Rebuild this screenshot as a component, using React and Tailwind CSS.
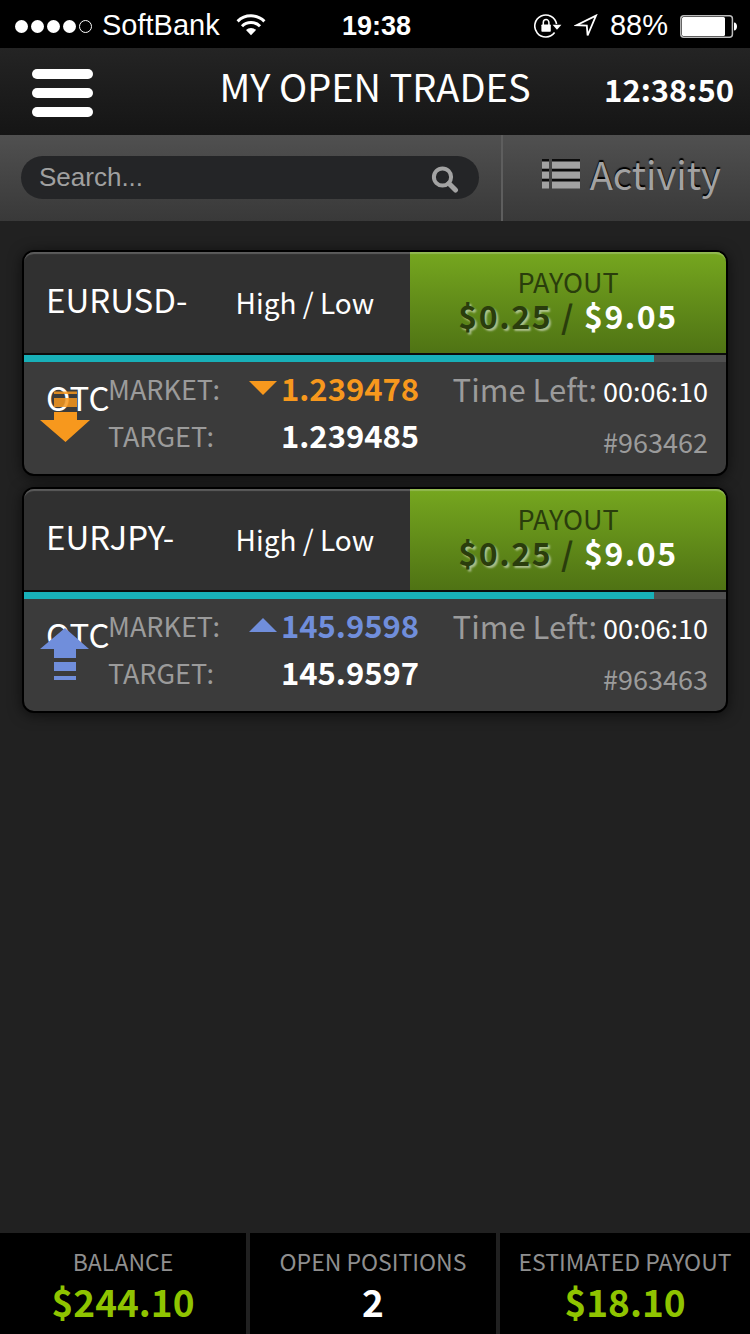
import React from "react";

const TRADES = [
  { id: "963462", symbol: "EURUSD-OTC", kind: "High / Low", dir: "down", market: "1.239478", target: "1.239485", timeLeft: "00:06:10", lose: "$0.25", win: "$9.05", pct: 89.7 },
  { id: "963463", symbol: "EURJPY-OTC", kind: "High / Low", dir: "up", market: "145.9598", target: "145.9597", timeLeft: "00:06:10", lose: "$0.25", win: "$9.05", pct: 89.7 },
];

const TOTALS = [
  { label: "BALANCE", value: "$244.10", color: "text-[#8fc400]" },
  { label: "OPEN POSITIONS", value: "2", color: "text-white" },
  { label: "ESTIMATED PAYOUT", value: "$18.10", color: "text-[#8fc400]" },
];

function WifiIcon() {
  return (
    <svg width="30" height="22" viewBox="0 0 30 22" fill="none" stroke="#fff" strokeWidth="3">
      <path d="M1.6 7.4a19 19 0 0 1 26.8 0" />
      <path d="M6 12.2a12.8 12.8 0 0 1 18 0" />
      <path d="M15 21.2l-5-5.2a7.2 7.2 0 0 1 10 0z" fill="#fff" stroke="none" />
    </svg>
  );
}

function RotationLockIcon() {
  return (
    <svg width="28" height="24" viewBox="0 0 28 24" fill="none" stroke="#fff">
      <path d="M22.6 10A11 11 0 1 0 20.6 18.6" strokeWidth="1.6" />
      <path d="M18.6 10.8h8.8l-4.4 5z" fill="#fff" stroke="none" />
      <rect x="7.4" y="10.4" width="9.4" height="7.4" rx="0.8" fill="#fff" stroke="none" />
      <path d="M9.3 11V8.4a2.8 2.8 0 0 1 5.6 0V11" strokeWidth="1.5" />
    </svg>
  );
}

function LocationIcon() {
  return (
    <svg width="24" height="24" viewBox="0 0 24 24" fill="none" stroke="#fff" strokeWidth="1.8">
      <path d="M22 1.6L2.5 11.2l10.3 0.5L13.6 21.5z" />
    </svg>
  );
}

function BatteryIcon() {
  return (
    <svg width="58" height="23" viewBox="0 0 58 23">
      <rect x="0.8" y="0.8" width="51.6" height="21.4" rx="3" fill="none" stroke="#bbb" strokeWidth="1.5" />
      <rect x="2" y="2" width="43" height="19" rx="1.5" fill="#fff" />
      <path d="M54 7.5c4 0 4 8 0 8z" fill="#fff" />
    </svg>
  );
}

function ListIcon() {
  return (
    <svg width="38" height="32" viewBox="0 0 38 32">
      {[0, 10, 20].map((y) => (
        <g key={y}>
          <path d={`M0 ${y + 1}h7v3h-7zM10 ${y + 1}h28v3h-28z`} fill="#0c0c0c" />
          <path d={`M0 ${y + 3.5}h7v7h-7zM10 ${y + 3.5}h28v7h-28z`} fill="#a2a2a2" />
        </g>
      ))}
    </svg>
  );
}

function DirectionArrow({ dir }) {
  if (dir === "down") {
    return (
      <svg width="50" height="52" viewBox="0 0 50 52" fill="#f7981d">
        <path d="M14 0.5h23v2.5H14zM14 7h23v9H14z" opacity="0.85" />
        <path d="M14 21h23v8h13L25.5 51 0 29h14z" />
      </svg>
    );
  }
  return (
    <svg width="50" height="52" viewBox="0 0 50 52" fill="#708edb">
      <path d="M25 0l24 21H36v9H14v-9H0z" />
      <path d="M14 34h22v9H14zM14 48h22v4H14z" />
    </svg>
  );
}

function StatusBar() {
  return (
    <div className="grid h-12 grid-cols-[1fr_auto_1fr] items-center bg-black pt-1 pr-3 pl-[15px] font-['Liberation_Sans',sans-serif] text-[29px] text-white">
      <div className="flex items-center gap-2.5">
        <div className="flex gap-[3px]">
          {[0, 1, 2, 3].map((i) => (
            <span key={i} className="size-[13px] rounded-full bg-white" />
          ))}
          <span className="size-[13px] rounded-full border border-white" />
        </div>
        <span>SoftBank</span>
        <div className="pb-0.5 pl-1.5">
          <WifiIcon />
        </div>
      </div>
      <span className="text-[27px] font-bold">19:38</span>
      <div className="flex items-center justify-end gap-3">
        <RotationLockIcon />
        <LocationIcon />
        <span>88%</span>
        <BatteryIcon />
      </div>
    </div>
  );
}

function TradeCard({ trade }) {
  const down = trade.dir === "down";
  return (
    <article className="rounded-xl border-2 border-black bg-[#3b3b3b] shadow-[0_2px_14px_rgba(0,0,0,0.6)]">
      <div className="flex h-[103px] rounded-t-[10px] border-b-2 border-[#0c0c0c] bg-[#303030] shadow-[inset_0_3px_1px_-1px_#5c5c5c]">
        <h2 className="relative z-10 -mt-0.5 w-[30%] pl-[22px] text-[33px] leading-[98px] text-white">{trade.symbol}</h2>
        <p className="w-1/4 pl-px text-[28px] leading-[101px] text-white">{trade.kind}</p>
        <div className="w-[45%] rounded-tr-[10px] bg-linear-to-b from-[#76a71f] to-[#4f7314] pt-[15px] text-center text-[#2a3d0c] shadow-[inset_0_3px_1px_-1px_#93ba52]">
          <p className="text-[27px] leading-[30px]">PAYOUT</p>
          <p className="text-[32px] leading-[37px] font-bold tracking-wider">
            <span className="[text-shadow:2px_2px_2px_rgba(255,255,255,0.5)]">{trade.lose}</span> /{" "}
            <span className="text-white">{trade.win}</span>
          </p>
        </div>
      </div>

      <div className="h-[7px] bg-[#4f4f4f]">
        <div className="h-full bg-[#18b0b8]" style={{ width: `${trade.pct}%` }} />
      </div>

      <div className="relative flex h-28 justify-between pr-[18px]">
        <div className="absolute top-[29px] left-4 z-20">
          <DirectionArrow dir={trade.dir} />
        </div>
        <dl className="grid grid-cols-[141px_auto] content-start pt-0.5 pl-[84px] leading-[47px]">
          <dt className="pt-0.5 text-[27px] leading-[45px] text-[#9b9b9b]">MARKET:</dt>
          <dd className={`flex items-center gap-1 text-[31px] font-bold ${down ? "text-[#f7981d]" : "text-[#708edb]"}`}>
            <svg width="28" height="14" viewBox="0 0 28 14" fill="currentColor">
              <path d={down ? "M0 0h28L14 14z" : "M0 14h28L14 0z"} />
            </svg>
            {trade.market}
          </dd>
          <dt className="pt-0.5 text-[27px] leading-[45px] text-[#9b9b9b]">TARGET:</dt>
          <dd className="pl-8 text-[31px] font-bold text-white">{trade.target}</dd>
        </dl>
        <div className="pt-px text-right text-[27px] leading-[51px]">
          <p className="text-white">
            <span className="text-[31px] text-[#9b9b9b]">Time Left:</span> {trade.timeLeft}
          </p>
          <p className="text-[#9b9b9b]">#{trade.id}</p>
        </div>
      </div>
    </article>
  );
}

export default function App() {
  return (
    <div className="flex min-h-screen flex-col bg-[#212121] font-['Noto_Sans_CJK_SC',sans-serif]">
      <StatusBar />

      <header className="grid h-[87px] grid-cols-[1fr_auto_1fr] items-center bg-linear-to-b from-[#242424] to-[#151515] px-4 text-white">
        <button type="button" aria-label="Menu" className="mt-0.5 ml-4 flex w-[61px] flex-col gap-[9px]">
          <span className="h-2.5 rounded-full bg-white" />
          <span className="h-2.5 rounded-full bg-white" />
          <span className="h-2.5 rounded-full bg-white" />
        </button>
        <h1 className="pb-3 text-[38px] leading-[56px]">MY OPEN TRADES</h1>
        <time className="pb-1.5 text-right text-[31px] leading-[44px] font-bold">12:38:50</time>
      </header>

      <div className="flex h-[86px] bg-linear-to-b from-[#505050] to-[#393939]">
        <div className="flex w-[67%] items-center border-r-2 border-[#5e5e5e] pr-[22px] pb-px pl-[21px]">
          <label className="flex h-[43px] flex-1 items-center rounded-full bg-[#242527] pr-5 pl-[18px]">
            <input
              type="text"
              aria-label="Search"
              placeholder="Search..."
              className="min-w-0 flex-1 bg-transparent font-['Liberation_Sans',sans-serif] text-[26px] text-white outline-none placeholder:text-[#a0a0a0]"
            />
            <svg width="28" height="32" viewBox="0 0 28 32" fill="none" stroke="#a3a3a3">
              <circle cx="11.5" cy="15" r="8.6" strokeWidth="4" />
              <path d="M18 21.5l6.5 6.5" strokeWidth="5" strokeLinecap="round" />
            </svg>
          </label>
        </div>
        <button type="button" className="flex flex-1 items-center justify-center gap-2.5 pb-2 pl-2.5 text-[38px] leading-[56px] text-[#a2a2a2]">
          <ListIcon />
          <span className="[text-shadow:0_-2px_1px_#000]">Activity</span>
        </button>
      </div>

      <main className="flex flex-1 flex-col gap-[11px] px-[22px] pt-[29px]">
        {TRADES.map((trade) => (
          <TradeCard key={trade.id} trade={trade} />
        ))}
      </main>

      <footer className="flex">
        {TOTALS.map((total) => (
          <div key={total.label} className="h-[101px] w-1/3 border-r-4 border-[#212121] bg-black pt-[11px] text-center last:border-r-0">
            <p className="text-[23px] leading-[34px] text-[#8f8f8f]">{total.label}</p>
            <p className={`text-[37px] leading-[46px] font-bold ${total.color}`}>{total.value}</p>
          </div>
        ))}
      </footer>
    </div>
  );
}
